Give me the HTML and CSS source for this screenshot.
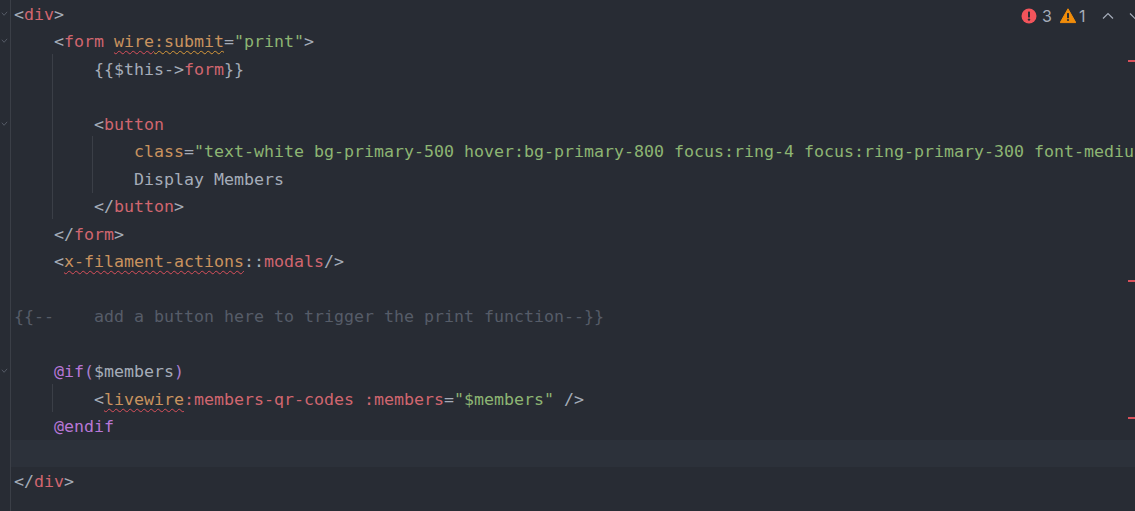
FILE: index.html
```html
<!DOCTYPE html>
<html lang="en">
<head>
<meta charset="utf-8">
<title>members.blade.php</title>
<link rel="stylesheet" href="styles.css">
</head>
<body>
<main class="editor">
  <div class="gutter">
    <div class="fold"><svg viewBox="0 0 8 6" class="fold-icon"><path d="M1 1.5 3.5 4.5 7 .5"/></svg></div>
    <div class="fold"><svg viewBox="0 0 8 6" class="fold-icon"><path d="M1 1.5 3.5 4.5 7 .5"/></svg></div>
    <div class="fold"></div>
    <div class="fold"></div>
    <div class="fold"><svg viewBox="0 0 8 6" class="fold-icon"><path d="M1 1.5 3.5 4.5 7 .5"/></svg></div>
    <div class="fold"></div>
    <div class="fold"></div>
    <div class="fold"></div>
    <div class="fold"></div>
    <div class="fold"></div>
    <div class="fold"></div>
    <div class="fold"></div>
    <div class="fold"></div>
    <div class="fold"><svg viewBox="0 0 8 6" class="fold-icon"><path d="M1 1.5 3.5 4.5 7 .5"/></svg></div>
    <div class="fold"></div>
    <div class="fold"></div>
    <div class="fold"></div>
    <div class="fold"></div>
  </div>
  <div class="code">
    <div class="line"><span class="p">&lt;</span><span class="t">div</span><span class="p">&gt;</span></div>
    <div class="line">    <span class="p">&lt;</span><span class="t">form</span> <span class="a err">wire</span><span class="a err-warn">:submit</span><span class="p">=</span><span class="s">"print"</span><span class="p">&gt;</span></div>
    <div class="line">        <span class="p">{{$this-&gt;</span><span class="t">form</span><span class="p">}}</span></div>
    <div class="line"> </div>
    <div class="line">        <span class="p">&lt;</span><span class="t">button</span></div>
    <div class="line">            <span class="a">class</span><span class="p">=</span><span class="s">"text-white bg-primary-500 hover:bg-primary-800 focus:ring-4 focus:ring-primary-300 font-mediu</span></div>
    <div class="line">            <span class="p">Display Members</span></div>
    <div class="line">        <span class="p">&lt;/</span><span class="t">button</span><span class="p">&gt;</span></div>
    <div class="line">    <span class="p">&lt;/</span><span class="t">form</span><span class="p">&gt;</span></div>
    <div class="line">    <span class="p">&lt;</span><span class="a err">x-filament-actions</span><span class="p">::</span><span class="t">modals</span><span class="p">/&gt;</span></div>
    <div class="line"> </div>
    <div class="line"><span class="c">{{--    add a button here to trigger the print function--}}</span></div>
    <div class="line"> </div>
    <div class="line">    <span class="k">@if</span><span class="b">(</span><span class="p">$members</span><span class="b">)</span></div>
    <div class="line">        <span class="p">&lt;</span><span class="a err">livewire</span><span class="t">:members-qr-codes</span> <span class="t">:members</span><span class="p">=</span><span class="s">"$members"</span> <span class="p">/&gt;</span></div>
    <div class="line">    <span class="k">@endif</span></div>
    <div class="line current"> </div>
    <div class="line"><span class="p">&lt;/</span><span class="t">div</span><span class="p">&gt;</span></div>
  </div>

  <i class="guide guide-form"></i>
  <i class="guide guide-button"></i>
  <i class="guide guide-if"></i>

  <i class="mark mark-1"></i>
  <i class="mark mark-2"></i>
  <i class="mark mark-3"></i>

  <div class="status">
    <svg class="status-icon" viewBox="0 0 16 16"><circle cx="8" cy="8" r="7.5" fill="#f2545b"/><rect x="7" y="3.5" width="2" height="6" rx=".6" fill="#282c34"/><circle cx="8" cy="11.6" r="1.2" fill="#282c34"/></svg>
    <span class="count count-err">3</span>
    <svg class="status-icon" viewBox="0 0 16 16"><path d="M8 .8 15.8 14.6H.2Z" fill="#f08c0a" stroke="#f08c0a" stroke-linejoin="round"/><rect x="7" y="5" width="2" height="5.2" rx=".5" fill="#282c34"/><circle cx="8" cy="12" r="1.1" fill="#282c34"/></svg>
    <span class="count count-warn">1</span>
    <svg class="chev chev-up" viewBox="0 0 12 8"><path d="M1 6.5 6 1.5l5 5"/></svg>
    <svg class="chev chev-down" viewBox="0 0 12 8"><path d="M1 1.5l5 5 5-5"/></svg>
  </div>
</main>
</body>
</html>
```

FILE: styles.css
```css
* { box-sizing: border-box; }
html, body {
  margin: 0;
  height: 100%;
  background: #282c34;
  overflow: hidden;
}
.editor {
  position: relative;
  display: flex;
  width: 1135px;
  height: 511px;
  overflow: hidden;
  background: #282c34;
  font-family: "DejaVu Sans Mono", "Liberation Mono", monospace;
  font-size: 16.61px;
  color: #a5acb9;
}
.gutter {
  flex: 0 0 11px;
  border-right: 1px solid #3b3f47;
}
.fold {
  height: 27.47px;
  display: flex;
  align-items: center;
  padding-left: 1px;
}
.fold-icon {
  width: 7px;
  height: 6px;
  fill: none;
  stroke: #5a606b;
  stroke-width: 1;
}
.code {
  flex: 1;
  min-width: 0;
}
.line {
  height: 27.47px;
  line-height: 27.47px;
  padding: 1px 0 0 3px;
  white-space: pre;
}
.current { background: #2c313a; }
.p { color: #a5acb9; }
.t { color: #d0666f; }
.a { color: #c9935f; }
.s { color: #8db573; }
.c { color: #565c68; }
.k { color: #b877d6; }
.b { color: #a87fd0; }
.err, .err-warn {
  text-decoration: underline wavy #d9505a 1px;
  text-underline-offset: 3px;
}
.err-warn { text-decoration-color: #d99a3a; }
.guide {
  position: absolute;
  width: 1px;
  background: #3b3f47;
}
.guide-form { left: 52px; top: 54px; height: 165px; }
.guide-button { left: 92px; top: 136px; height: 57px; }
.guide-if { left: 52px; top: 384px; height: 28px; }
.mark {
  position: absolute;
  right: 0;
  width: 7px;
  height: 2px;
  background: #d9505a;
}
.mark-1 { top: 60px; }
.mark-2 { top: 280px; }
.mark-3 { top: 417px; }
.status {
  position: absolute;
  top: 6px;
  left: 1021px;
  display: flex;
  align-items: center;
  height: 20px;
  font-family: "Inter", "Liberation Sans", sans-serif;
  font-size: 16px;
  color: #a5acb9;
}
.status-icon {
  flex: none;
  width: 16px;
  height: 16px;
}
.count {
  flex: none;
  width: 10px;
  margin-left: 5px;
}
.count-err { margin-right: 8px; }
.count-warn { margin-left: 3px; }
.chev {
  flex: none;
  width: 12px;
  height: 8px;
  fill: none;
  stroke: #a5acb9;
  stroke-width: 1.2;
}
.chev-up { margin-left: 13px; }
.chev-down { margin-left: 15px; }
```
